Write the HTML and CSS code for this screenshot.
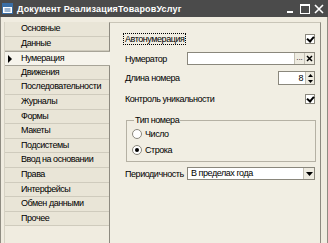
FILE: index.html
```html
<!DOCTYPE html>
<html>
<head>
<meta charset="utf-8">
<link rel="stylesheet" href="styles.css">
</head>
<body>
<div class="window">
  <div class="titlebar">
    <svg class="appicon" width="11" height="11" viewBox="0 0 11 11">
      <rect x="0.5" y="0.5" width="10" height="10" fill="#fff" stroke="#3a6ea5"/>
      <rect x="1" y="1" width="9" height="3" fill="#3a6ea5"/>
      <rect x="2.5" y="5.5" width="6" height="1" fill="#3a6ea5"/>
      <rect x="2.5" y="7.5" width="6" height="1" fill="#3a6ea5"/>
    </svg>
    <span class="title">Документ РеализацияТоваровУслуг</span>
    <div class="winbtns">
      <svg width="10" height="10" viewBox="0 0 10 10"><rect x="1" y="7" width="6" height="2" fill="#fff"/></svg>
      <svg width="10" height="10" viewBox="0 0 10 10"><rect x="0.5" y="0.5" width="9" height="9" fill="none" stroke="#fff"/><rect x="0" y="0" width="10" height="2" fill="#fff"/></svg>
      <svg width="10" height="10" viewBox="0 0 10 10"><path d="M1 1 L9 9 M9 1 L1 9" stroke="#fff" stroke-width="1.6"/></svg>
    </div>
  </div>
  <div class="body">
    <ul class="tabs">
      <li>Основные</li>
      <li>Данные</li>
      <li class="active"><span class="arrow"></span>Нумерация</li>
      <li>Движения</li>
      <li>Последовательности</li>
      <li>Журналы</li>
      <li>Формы</li>
      <li>Макеты</li>
      <li>Подсистемы</li>
      <li>Ввод на основании</li>
      <li>Права</li>
      <li>Интерфейсы</li>
      <li>Обмен данными</li>
      <li>Прочее</li>
    </ul>
    <div class="panel">
      <div class="row r1">
        <span class="focus">Автонумерация</span>
        <span class="check"></span>
      </div>
      <div class="row r2">
        <span class="label">Нумератор</span>
        <div class="field wide">
          <span class="val"></span>
          <span class="btn dots">...</span>
          <span class="btn cross">
            <svg width="7" height="7" viewBox="0 0 7 7"><path d="M1 1 L6 6 M6 1 L1 6" stroke="#000" stroke-width="1.5"/></svg>
          </span>
        </div>
      </div>
      <div class="row r3">
        <span class="label">Длина номера</span>
        <div class="field num">
          <span class="val right">8</span>
          <span class="spin">
            <svg width="7" height="12" viewBox="0 0 7 12"><path d="M3.5 2 L6 5 L1 5 Z" fill="#000"/><path d="M1 8 L6 8 L3.5 11 Z" fill="#000"/></svg>
          </span>
        </div>
      </div>
      <div class="row r4">
        <span>Контроль уникальности</span>
        <span class="check"></span>
      </div>
      <fieldset class="group">
        <legend>Тип номера</legend>
        <div class="radio"><span class="rb"></span>Число</div>
        <div class="radio"><span class="rb on"></span>Строка</div>
      </fieldset>
      <div class="row r5">
        <span class="label">Периодичность</span>
        <div class="field wide">
          <span class="val">В пределах года</span>
          <span class="btn drop">
            <svg width="7" height="4" viewBox="0 0 7 4"><path d="M0 0 L7 0 L3.5 4 Z" fill="#000"/></svg>
          </span>
        </div>
      </div>
    </div>
  </div>
</div>
</body>
</html>
```
FILE: styles.css
```css
* { box-sizing: border-box; }
html, body { margin: 0; padding: 0; }
body {
  width: 328px;
  height: 243px;
  overflow: hidden;
  background: #efebde;
  font-family: "Liberation Sans", Arial, sans-serif;
  font-size: 9px;
  letter-spacing: -0.45px;
  color: #000;
}
.window {
  height: 243px;
  display: flex;
  flex-direction: column;
  background: #f0ece0;
  border-left: 1px solid #8f8c82;
  border-right: 1px solid #8f8c82;
}
.titlebar {
  height: 17px;
  flex: none;
  background: #4b4b4b;
  display: flex;
  align-items: center;
  padding-left: 2px;
  margin-left: -1px;
  margin-right: -1px;
}
.appicon { margin-right: 4px; }
.title {
  color: #fff;
  font-weight: bold;
  font-size: 9px;
  letter-spacing: 0.15px;
  flex: 1;
  white-space: nowrap;
}
.winbtns {
  display: flex;
  gap: 4px;
  padding-right: 4px;
}
.body {
  flex: 1;
  display: flex;
  padding: 5px 6px 0 3px;
  min-height: 0;
}
.tabs {
  list-style: none;
  margin: 0;
  padding: 0;
  width: 105px;
  flex: none;
  border-left: 1px solid #d6d2c4;
}
.tabs li {
  height: 14.6px;
  line-height: 13.6px;
  padding-left: 16px;
  background: #e9e5d7;
  border-bottom: 1px solid #cfcbbd;
  white-space: nowrap;
  position: relative;
}
.tabs li.active {
  background: #f6f4ec;
  border-top: 1px solid #a7a498;
  border-bottom: 1px solid #a7a498;
  margin-right: -1px;
  z-index: 1;
}
.arrow {
  position: absolute;
  left: 3px;
  top: 3px;
  width: 0;
  height: 0;
  border-left: 4px solid #000;
  border-top: 4px solid transparent;
  border-bottom: 4px solid transparent;
}
.panel {
  flex: 1;
  background: #f1eee3;
  border-left: 1px solid #8d8a80;
  border-top: 1px solid #c9c5b8;
  border-right: 1px solid #8d8a80;
  padding: 10px 4px 0 15px;
  display: flex;
  flex-direction: column;
}
.row {
  display: flex;
  align-items: center;
  white-space: nowrap;
}
.r1 { height: 12px; justify-content: space-between; }
.r2 { height: 13px; margin-top: 7px; }
.r3 { height: 14px; margin-top: 6px; }
.r4 { height: 12px; margin-top: 8px; justify-content: space-between; }
.r5 { height: 13px; margin-top: 5px; }
.focus {
  outline: 1px dotted #000;
  outline-offset: 0;
  padding: 0 1px;
  margin-left: -1px;
}
.label { width: 62px; flex: none; }
.check {
  width: 10px;
  height: 10px;
  background: #fff;
  border: 1px solid #8a877c;
  margin-right: 1px;
  position: relative;
}
.check::after {
  content: "";
  position: absolute;
  left: 2px;
  top: 0px;
  width: 3px;
  height: 5px;
  border-right: 2px solid #000;
  border-bottom: 2px solid #000;
  transform: rotate(40deg);
}
.field {
  display: flex;
  height: 100%;
  background: #fff;
  border: 1px solid #8a877c;
}
.field.wide { width: 128px; }
.field.num { width: 37px; margin-left: auto; margin-right: 1px; }
.val {
  flex: 1;
  padding-left: 3px;
  line-height: 11px;
  overflow: hidden;
}
.val.right { text-align: right; padding-right: 2px; line-height: 12px; }
.btn {
  width: 10px;
  flex: none;
  background: #eeebe0;
  border-left: 1px solid #c2bfb3;
  display: flex;
  align-items: center;
  justify-content: center;
  font-size: 8px;
  line-height: 8px;
  letter-spacing: 0;
}
.btn.dots { align-items: flex-end; padding-bottom: 2px; }
.btn.drop { width: 11px; }
.spin {
  width: 9px;
  flex: none;
  background: #eeebe0;
  border-left: 1px solid #c2bfb3;
  display: flex;
  align-items: center;
  justify-content: center;
}
.group {
  margin: 9px 0 0 1px;
  padding: 0 0 3px 5px;
  border: 1px solid #b5b1a4;
  border-radius: 0;
}
.group legend {
  padding: 0 1px;
  margin-left: 2px;
  line-height: 12px;
}
.radio {
  height: 16px;
  display: flex;
  align-items: center;
}
.rb {
  width: 10px;
  height: 10px;
  border-radius: 50%;
  background: #fff;
  border: 1px solid #8a877c;
  margin-right: 3px;
  display: flex;
  align-items: center;
  justify-content: center;
}
.rb.on::after {
  content: "";
  width: 4px;
  height: 4px;
  border-radius: 50%;
  background: #000;
}
```
